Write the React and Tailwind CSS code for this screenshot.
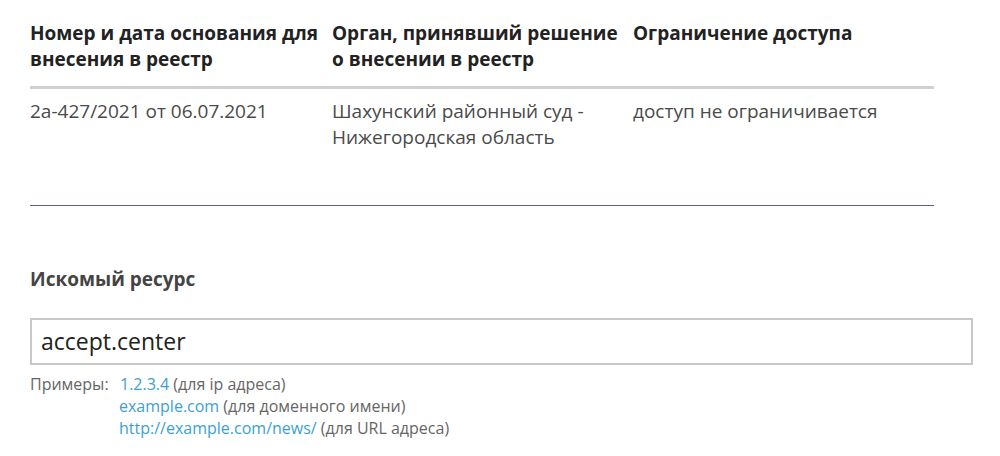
export default function App() {
  const font = { fontFamily: '"Open Sans", "Noto Sans", sans-serif' };

  return (
    <div className="w-[1000px] h-[456px] bg-white overflow-hidden" style={font}>
      <div className="pl-[30px] pt-[20px]">
        {/* таблица с основанием */}
        <div className="w-[904px]">
          <div className="grid grid-cols-[302px_301px_301px] border-b-[3px] border-[#d0d0d0] pb-[14px] text-[19px] leading-[26px] font-bold text-[#222]">
            <div>Номер и дата основания для внесения в реестр</div>
            <div className="pr-[4px]">Орган, принявший решение о внесении в реестр</div>
            <div>Ограничение доступа</div>
          </div>
          <div className="grid grid-cols-[302px_301px_301px] border-b border-[#5c6094] pt-[9px] h-[117px] text-[19px] leading-[26px] text-[#4a4a4a]">
            <div>2а-427/2021 от 06.07.2021</div>
            <div>Шахунский районный суд - Нижегородская область</div>
            <div>доступ не ограничивается</div>
          </div>
        </div>

        <div className="pt-[60px] text-[19px] leading-[26px] font-bold text-[#444]">Искомый ресурс</div>

        <div className="mt-[26px] w-[943px] h-[47px] border-2 border-[#c8c8c8] flex items-center px-[9px] text-[23px] text-[#222]">
          accept.center
        </div>

        <div className="flex pt-[8px] text-[16px] leading-[22px] text-[#666]">
          <div className="w-[90px]">Примеры:</div>
          <div className="flex flex-col">
            <div>
              <span className="text-[#3b9fd4]">1.2.3.4</span> (для ip адреса)
            </div>
            <div className="-ml-[1px]">
              <span className="text-[#3b9fd4]">example.com</span> (для доменного имени)
            </div>
            <div className="-ml-[1px]">
              <span className="text-[#3b9fd4]">http://example.com/news/</span> (для URL адреса)
            </div>
          </div>
        </div>
      </div>
    </div>
  );
}
